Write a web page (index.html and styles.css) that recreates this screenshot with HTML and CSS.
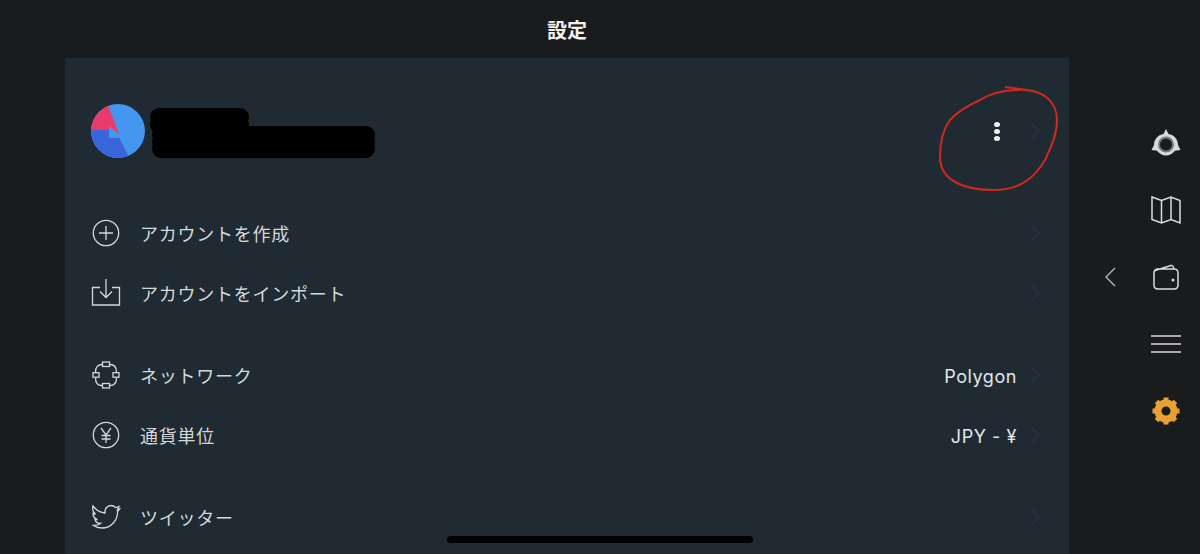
FILE: index.html
```html
<!DOCTYPE html>
<html lang="ja">
<head>
<meta charset="utf-8">
<title>設定</title>
<link rel="stylesheet" href="styles.css">
</head>
<body>
<div class="screen">
  <main class="main">
    <header class="title">設定</header>
    <section class="panel">
      <div class="account">
        <svg class="avatar" viewBox="0 0 54 54" width="54" height="54">
          <defs><clipPath id="disc"><circle cx="27" cy="27" r="27"/></clipPath></defs>
          <g clip-path="url(#disc)">
            <rect width="54" height="54" fill="#4596ef"/>
            <path d="M0 25.500L18 25.500 18 34 28.300 34 37.300 51.500 40 60 0 60Z" fill="#3a66dc"/>
            <path d="M0 25.500L0 0 18 0 17.300 2 28.300 30.500 18 22 18 25.500Z" fill="#e93a6c"/>
          </g>
        </svg>
        <div class="kebab"><i></i><i></i><i></i></div>
        <svg class="chev" viewBox="0 0 9 16" width="9" height="16"><path d="M1 1l7 7-7 7"/></svg>
      </div>

      <div class="group">
        <div class="row">
          <svg class="ico" viewBox="0 0 30 30" width="30" height="30"><circle cx="15" cy="15" r="12.700"/><path d="M15 8v14M8 15h14"/></svg>
          <span class="label">アカウントを作成</span>
          <svg class="chev" viewBox="0 0 9 16" width="9" height="16"><path d="M1 1l7 7-7 7"/></svg>
        </div>
        <div class="row">
          <svg class="ico" viewBox="0 0 30 30" width="30" height="30"><path d="M9 9.500H1.500V27h27V9.500H21M15 1v18M9 13.500l6 6 6-6"/></svg>
          <span class="label">アカウントをインポート</span>
          <svg class="chev" viewBox="0 0 9 16" width="9" height="16"><path d="M1 1l7 7-7 7"/></svg>
        </div>
      </div>

      <div class="group">
        <div class="row">
          <svg class="ico" viewBox="0 0 30 30" width="30" height="30"><rect x="11.500" y="2" width="7" height="4.500"/><rect x="11.500" y="23.500" width="7" height="4.500"/><rect x="2" y="12.700" width="6" height="4.500"/><rect x="22" y="12.700" width="6" height="4.500"/><path d="M11 4.500C7 4.500 4.500 7 4.500 12M19 4.500c4 0 6.500 2.500 6.500 7.500M4.500 18c0 5 2.500 7.500 6.500 7.500M25.500 18c0 5-2.500 7.500-6.500 7.500"/></svg>
          <span class="label">ネットワーク</span>
          <span class="value">Polygon</span>
          <svg class="chev" viewBox="0 0 9 16" width="9" height="16"><path d="M1 1l7 7-7 7"/></svg>
        </div>
        <div class="row">
          <svg class="ico" viewBox="0 0 30 30" width="30" height="30"><circle cx="15" cy="15" r="12.700"/><path d="M10 8l5 7 5-7M15 15v8M10.500 15.500h9M10.500 19h9"/></svg>
          <span class="label">通貨単位</span>
          <span class="value">JPY - ¥</span>
          <svg class="chev" viewBox="0 0 9 16" width="9" height="16"><path d="M1 1l7 7-7 7"/></svg>
        </div>
      </div>

      <div class="group">
        <div class="row">
          <svg class="ico" viewBox="0 0 30 30" width="30" height="30"><path d="M2 4c3 4 7 6.500 12 7-.5-4 2-7.500 6-7.500 2 0 3.500 1 4.500 2L28 4.500l-1.500 3 2-.5-2 2.500C27 18 20 26 11 26c-3 0-6-.7-8.500-2.500 3 0 5-.5 7-2-3 0-5-2-5.500-4h2.500c-3-1-4.500-3-4.500-6l2.500.8C2 10 1 7 2 4z"/></svg>
          <span class="label">ツイッター</span>
          <svg class="chev" viewBox="0 0 9 16" width="9" height="16"><path d="M1 1l7 7-7 7"/></svg>
        </div>
      </div>
    </section>
  </main>

  <nav class="rail">
    <svg class="back" viewBox="0 0 12 20" width="12" height="20"><path d="M11 1L2 10l9 9"/></svg>
    <div class="tabs">
      <svg class="tab" viewBox="0 0 30 30" width="30" height="30"><path class="fill" d="M15 1l2.500 5C23 7 27 11 27 17l2.500 5-5.500.8C21.500 26 18.500 27.500 15 27.500s-6.500-1.500-9-4.700L.5 22 3 17C3 11 7 7 12.500 6z"/><circle cx="15" cy="16.500" r="7" fill="#1a1b1d" stroke="#77797b" stroke-width="2"/></svg>
      <svg class="tab stroke" viewBox="0 0 30 30" width="30" height="30"><path d="M1 2l9.500 3.500L20 2l9 3.500V28l-9-3.500L10.500 28 1 24.500zM10.500 5.500V28M20 2v22.500"/></svg>
      <svg class="tab stroke" viewBox="0 0 30 30" width="30" height="30"><path d="M4 8.500L20 3.500q2-.5 2.500 2l.5 1.500M6 7h17q4 0 4 4v12q0 4-4 4H7q-4 0-4-4V11q0-3 3-4z"/><circle class="dot" cx="22" cy="18" r="1.500"/></svg>
      <div class="tab bars"><i></i><i></i><i></i></div>
      <svg class="tab" viewBox="0 0 30 30" width="30" height="30"><circle cx="15" cy="15" r="8" fill="none" stroke="#e8a033" stroke-width="7"/><g stroke="#e8a033" stroke-width="5"><path d="M15 1.500v5M15 23.500v5M1.500 15h5M23.500 15h5M5.500 5.500L9 9M21 21l3.500 3.500M24.500 5.500L21 9M9 21l-3.500 3.500"/></g></svg>
    </div>
  </nav>

  <svg class="redact" viewBox="0 0 240 60" width="240" height="60"><path d="M14 12h81M14 20h81M16 30h205M16 37h205M16 44h205"/></svg>
  <svg class="circle" viewBox="0 0 120 108" width="120" height="108"><path d="M66 2L88 5C106 7 118 18 118 35 118 50 112 62 106 75 96 92 82 105 54 105 30 105 1 98 1 72 1 55 5 43 11 35 20 25 30 20 41 15 50 9 64 4 88 5"/></svg>
  <div class="home"></div>
</div>
</body>
</html>
```

FILE: styles.css
```css
* { box-sizing: border-box; }
html, body { margin: 0; height: 100%; overflow: hidden; }
body { background: #1a1b1d; font-family: "Noto Sans CJK JP", "Noto Sans", sans-serif; }
.screen { position: relative; display: flex; width: 1200px; height: 554px; overflow: hidden; }

.main { width: 1069px; height: 554px; padding-left: 65px; display: flex; flex-direction: column; }
.title { flex: none; height: 58px; display: flex; align-items: center; justify-content: center; color: #f0f0f0; font-size: 20px; font-weight: 700; }
.panel { flex: 1; min-height: 0; overflow: hidden; background: #1f2a33; display: flex; flex-direction: column; }

.account { flex: none; height: 145px; padding: 2px 29px 0 26px; display: flex; align-items: center; border-bottom: 1px solid #212c35; }
.avatar { flex: none; }
.kebab { margin-left: auto; margin-right: 16px; display: flex; flex-direction: column; gap: 2px; }
.kebab i { display: block; width: 6px; height: 5px; border-radius: 50%; background: #f2f3f4; }

.group { flex: none; display: flex; flex-direction: column; margin-bottom: 22px; }
.row { height: 60px; padding: 0 29px 0 26px; display: flex; align-items: center; border-bottom: 1px solid #212c35; }
.ico { flex: none; margin-right: 19px; fill: none; stroke: #d5d8da; stroke-width: 1.300; }
.label { color: #d5d8da; font-size: 18px; letter-spacing: .75px; }
.value { margin-left: auto; margin-right: 14px; padding-top: 3px; color: #e4e6e8; font-family: Inter, "Noto Sans", sans-serif; font-size: 18px; letter-spacing: .55px; }
.chev { flex: none; margin-left: 15px; fill: none; stroke: #29343e; stroke-width: 1.400; }
.row > .label + .chev { margin-left: auto; }
.value + .chev { margin-left: 0; }

.rail { position: relative; flex: 1; display: flex; align-items: center; }
.back { flex: none; margin-left: 35px; fill: none; stroke: #b5b6b8; stroke-width: 1.400; }
.tabs { margin-left: 35px; display: flex; flex-direction: column; align-items: center; gap: 37px; }
.tab { display: block; flex: none; }
.fill { fill: #d8d9da; }
.stroke { fill: none; stroke: #dcdddf; stroke-width: 1.500; }
.dot { fill: #dcdddf; stroke: none; }
.bars { width: 30px; height: 30px; display: flex; flex-direction: column; justify-content: center; gap: 6px; }
.bars i { display: block; height: 2px; background: #a9a9ab; }

.redact { position: absolute; left: 145px; top: 105px; fill: none; stroke: #000; stroke-width: 18; stroke-linecap: round; }
.circle { position: absolute; left: 939px; top: 85px; fill: none; stroke: #cf2a1e; stroke-width: 2; }
.home { position: absolute; left: 447px; top: 536px; width: 306px; height: 7px; border-radius: 4px; background: #000; }
```
